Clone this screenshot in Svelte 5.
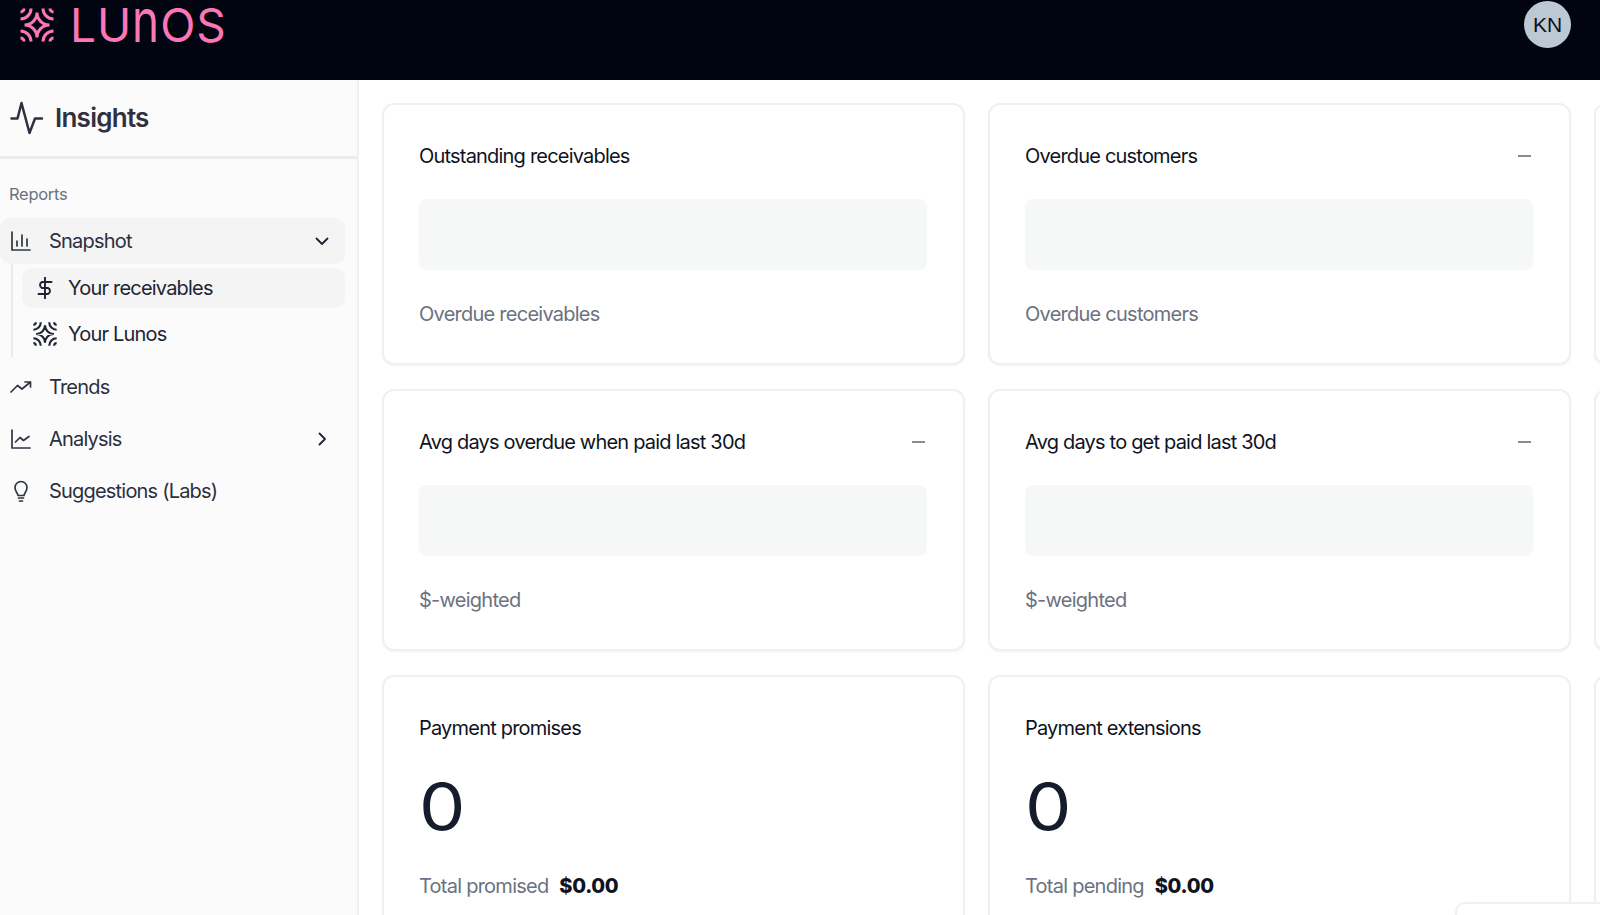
<script>
	const cards = [
		{ title: 'Outstanding receivables', sub: 'Overdue receivables' },
		{ title: 'Overdue customers', sub: 'Overdue customers', dash: true },
		{ title: '' },
		{ title: 'Avg days overdue when paid last 30d', sub: '$-weighted', dash: true },
		{ title: 'Avg days to get paid last 30d', sub: '$-weighted', dash: true },
		{ title: '' },
		{ title: 'Payment promises', count: '0', label: 'Total promised', amount: '$0.00' },
		{ title: 'Payment extensions', count: '0', label: 'Total pending', amount: '$0.00' },
		{ title: '' }
	];
</script>

{#snippet mark(size)}
	<svg width={size} height={size} viewBox="0 0 34 34" fill="none" stroke="currentColor" stroke-width="3">
		<path d="M17 4.500A12.500 12.500 0 0 0 29.500 17A12.500 12.500 0 0 0 17 29.500A12.500 12.500 0 0 0 4.500 17A12.500 12.500 0 0 0 17 4.500Z" />
		<path d="M11 0.500A10.500 10.500 0 0 1 0.500 11M23 0.500A10.500 10.500 0 0 0 33.500 11M11 33.500A10.500 10.500 0 0 0 0.500 23M23 33.500A10.500 10.500 0 0 1 33.500 23" />
		<path d="M4 0.500A3.500 3.500 0 0 1 0.500 4M30 0.500A3.500 3.500 0 0 0 33.500 4M4 33.500A3.500 3.500 0 0 0 0.500 30M30 33.500A3.500 3.500 0 0 1 33.500 30" />
	</svg>
{/snippet}

<div class="app">
	<header class="topbar">
		<div class="logo">
			{@render mark(34)}
			<span class="wordmark">LU<span class="arch">n</span>OS</span>
		</div>
		<div class="avatar">KN</div>
	</header>

	<div class="body">
		<aside class="sidebar">
			<div class="side-head">
				<svg width="34" height="34" viewBox="0 0 34 34" fill="none" stroke="#2f3140" stroke-width="2.500" stroke-linecap="round" stroke-linejoin="round">
					<path d="M1.500 17.500H7.500L11.500 2L19.500 32L25 17.500H32" />
				</svg>
				<span>Insights</span>
			</div>

			<div class="section-label">Reports</div>

			<nav class="nav">
				<div class="row open">
					<svg class="icon" viewBox="0 0 22 22" fill="none" stroke="#2f3542" stroke-width="1.700" stroke-linecap="round">
						<path d="M2 2V20H20M7 16V11M12 16V5M17 16V9" />
					</svg>
					<span class="grow">Snapshot</span>
					<svg class="chev" viewBox="0 0 16 16" fill="none" stroke="#1f2433" stroke-width="1.800" stroke-linecap="round" stroke-linejoin="round">
						<path d="M2.500 5.500L8 11L13.500 5.500" />
					</svg>
				</div>
				<div class="sublist">
					<div class="subrow active">
						<svg class="icon" viewBox="0 0 22 22" fill="none" stroke="#1f2433" stroke-width="1.900" stroke-linecap="round" stroke-linejoin="round">
							<path d="M11 0.500V21.500M17.500 5H8A3.250 3.250 0 0 0 8 11H14A3.250 3.250 0 0 1 14 17H4.500" />
						</svg>
						<span>Your receivables</span>
					</div>
					<div class="subrow">
						<span class="sub-mark">{@render mark(24)}</span>
						<span>Your Lunos</span>
					</div>
				</div>
				<div class="row">
					<svg class="icon" viewBox="0 0 22 22" fill="none" stroke="#2f3542" stroke-width="1.700" stroke-linecap="round" stroke-linejoin="round">
						<path d="M1 16L7.500 9.500L12 13L20.500 6M15 6H20.500V11" />
					</svg>
					<span class="grow">Trends</span>
				</div>
				<div class="row">
					<svg class="icon" viewBox="0 0 22 22" fill="none" stroke="#2f3542" stroke-width="1.700" stroke-linecap="round" stroke-linejoin="round">
						<path d="M2 2V20H20M5.500 14L10 9.500L13.500 12.500L19 8.500" />
					</svg>
					<span class="grow">Analysis</span>
					<svg class="chev" viewBox="0 0 16 16" fill="none" stroke="#1f2433" stroke-width="1.800" stroke-linecap="round" stroke-linejoin="round">
						<path d="M5.500 2.500L11 8L5.500 13.500" />
					</svg>
				</div>
				<div class="row">
					<svg class="icon" viewBox="0 0 22 22" fill="none" stroke="#2f3542" stroke-width="1.700" stroke-linecap="round" stroke-linejoin="round">
						<path d="M8 15.500C8 13 5 12 5 7.500A6 6 0 0 1 17 7.500C17 12 14 13 14 15.500ZM8.500 18H13.500M9.500 21H12.500" />
					</svg>
					<span class="grow">Suggestions (Labs)</span>
				</div>
			</nav>
		</aside>

		<main class="content">
			<div class="grid">
				{#each cards as card}
					<section class="card">
						{#if card.title}
							<div class="card-head">
								<span>{card.title}</span>
								{#if card.dash}<i class="dash"></i>{/if}
							</div>
							{#if card.count}
								<div class="count"><span>{card.count}</span></div>
								<div class="foot">{card.label} <b>{card.amount}</b></div>
							{:else}
								<div class="skeleton"></div>
								<div class="foot">{card.sub}</div>
							{/if}
						{/if}
					</section>
				{/each}
			</div>
		</main>
	</div>

	<div class="widget"></div>
</div>

<style>
	:global(body) {
		margin: 0;
		font-family: Inter, "Liberation Sans", sans-serif;
		overflow: hidden;
	}
	.app {
		position: relative;
		width: 1600px;
		height: 915px;
		overflow: hidden;
		background: #fff;
	}
	.topbar {
		height: 80px;
		box-sizing: border-box;
		background: #010510;
		display: flex;
		justify-content: space-between;
		align-items: flex-start;
		padding: 1px 29px 0 20px;
	}
	.logo {
		display: flex;
		align-items: center;
		gap: 16px;
		color: #fb76b6;
		height: 48px;
	}
	.wordmark {
		font-size: 46px;
		line-height: 48px;
		letter-spacing: 0.9px;
		white-space: nowrap;
	}
	.arch {
		display: inline-block;
		transform: scaleY(1.33);
		transform-origin: 50% 40.7px;
	}
	.avatar {
		width: 47px;
		height: 47px;
		border-radius: 50%;
		background: #bdc8d5;
		color: #0d1018;
		font-family: "Liberation Sans", sans-serif;
		font-size: 21px;
		display: flex;
		align-items: center;
		justify-content: center;
	}
	.body {
		display: flex;
		height: 835px;
	}
	.sidebar {
		width: 359px;
		flex: none;
		box-sizing: border-box;
		background: #fbfbfb;
		border-right: 2px solid #f0f0f2;
	}
	.side-head {
		height: 79px;
		box-sizing: border-box;
		border-bottom: 3px solid #ebebed;
		display: flex;
		align-items: center;
		gap: 11px;
		padding: 0 0 1px 10px;
		font-size: 26px;
		font-weight: 600;
		letter-spacing: -0.75px;
		color: #2f3140;
	}
	.section-label {
		padding: 25px 0 0 9px;
		font-size: 16.500px;
		line-height: 20px;
		letter-spacing: -0.3px;
		color: #6b7280;
	}
	.nav {
		margin-top: 13.500px;
		padding-right: 12px;
		display: flex;
		flex-direction: column;
		gap: 6px;
		font-size: 20px;
		letter-spacing: -0.8px;
		color: #2b303e;
	}
	.row {
		height: 46px;
		display: flex;
		align-items: center;
		gap: 17px;
		padding: 0 15px 0 10px;
		border-radius: 10px;
	}
	.row.open {
		background: #f4f4f5;
	}
	.grow {
		flex: 1;
	}
	.icon {
		width: 22px;
		height: 22px;
		flex: none;
	}
	.chev {
		width: 16px;
		height: 16px;
	}
	.sublist {
		margin: -6px 0 1px 11px;
		padding: 4px 0 3px 9px;
		border-left: 2px solid #ececee;
		display: flex;
		flex-direction: column;
		gap: 6.500px;
	}
	.subrow {
		height: 40px;
		display: flex;
		align-items: center;
		gap: 12px;
		padding-left: 12px;
		border-radius: 10px;
		color: #1f2433;
	}
	.subrow.active {
		background: #f4f4f5;
	}
	.sub-mark {
		display: flex;
		width: 24px;
		margin: 0 -1px 0 -1px;
		color: #1f2433;
	}
	.content {
		flex: 1;
		min-width: 0;
		overflow: hidden;
		padding: 23px 0 0 23px;
	}
	.grid {
		display: grid;
		grid-template-columns: repeat(3, 583px);
		gap: 24px 23px;
	}
	.card {
		height: 262px;
		box-sizing: border-box;
		padding: 39px 36px 0 35px;
		background: #fff;
		border: 2px solid #eff0f2;
		border-radius: 12px;
		box-shadow: 0 1px 2px rgba(17, 24, 39, 0.05);
	}
	.card-head {
		display: flex;
		justify-content: space-between;
		align-items: center;
		height: 24px;
		font-size: 20px;
		letter-spacing: -0.8px;
		color: #0f1322;
	}
	.dash {
		width: 13px;
		height: 2px;
		margin-right: 2px;
		background: #878b96;
	}
	.skeleton {
		height: 71px;
		margin-top: 31px;
		border-radius: 8px;
		background: #f6f7f7;
	}
	.foot {
		margin-top: 32px;
		font-size: 20px;
		line-height: 24px;
		letter-spacing: -0.75px;
		color: #6b7280;
	}
	.foot b {
		margin-left: 6px;
		font-weight: 800;
		letter-spacing: -0.3px;
		color: #0f1322;
	}
	.count {
		height: 71px;
		margin-top: 31px;
		font-size: 64px;
		line-height: 71px;
		color: #171c2c;
	}
	.count span {
		display: inline-block;
		transform: scaleX(1.15);
		transform-origin: 0 50%;
	}
	.widget {
		position: absolute;
		left: 1455px;
		top: 902px;
		width: 170px;
		height: 40px;
		box-sizing: border-box;
		background: #fff;
		border: 2px solid #eff0f2;
		border-radius: 10px;
	}
</style>
